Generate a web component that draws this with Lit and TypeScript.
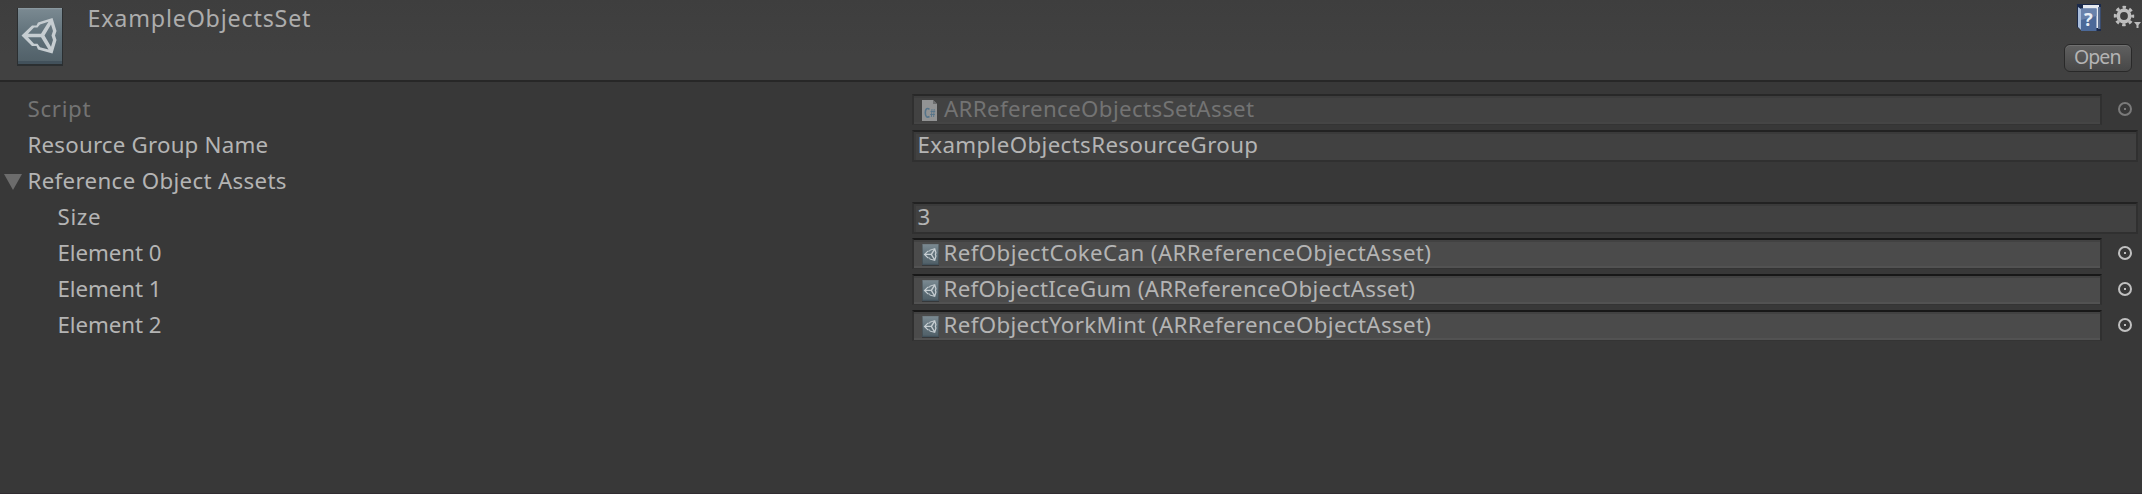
import { LitElement, html, css } from "lit";
import { customElement, property } from "lit/decorators.js";

/** A label whose tracking is derived from its nominal width. */
@customElement("fitted-label")
class FittedLabel extends LitElement {
  @property() text = "";
  @property({ type: Number }) span = 0;
  static styles = css`
    :host { display: block; white-space: pre; }
    .t { display: inline-block; }
  `;
  render() { return html`<span class="t">${this.text}</span>`; }
  updated() {
    const el = this.renderRoot.querySelector(".t") as HTMLElement;
    el.style.letterSpacing = "0px";
    const w = el.getBoundingClientRect().width;
    el.style.letterSpacing = ((this.span - w) / Math.max(1, this.text.length - 1)).toFixed(3) + "px";
  }
}

const label = (text: string, span: number) => html`<fitted-label .text=${text} .span=${span}></fitted-label>`;

const assetIcon = (w: number, h: number) => html`<svg class="asset" width=${w} height=${h} viewBox="0 0 46 60" preserveAspectRatio="none">
  <defs><linearGradient id="g" x1="0" y1="0" x2="0" y2="1"><stop offset="0" stop-color="#7b8a92"/><stop offset=".5" stop-color="#5f7079"/><stop offset="1" stop-color="#505f67"/></linearGradient></defs>
  <rect x="0" y="1" width="46" height="58" fill="#2b2f31"/>
  <rect x="1" y="1" width="44" height="56" fill="url(#g)"/>
  <rect x="1" y="1" width="44" height="1.2" fill="#8a989f"/><rect x="1" y="54" width="44" height="3" fill="#42515b"/>
  <path d="M4.500 28.500 15 18.500H19.500L21 15.500 35.500 11 39.500 24 38 28.500 39.500 33 35.500 46.500 21 42.500 19.500 39H15Z
    M11 26.700H24L31.500 14.800 23 17.500 20.500 20.500H17Z M11 30.300 17 36.800H20.500L23 40.200 31.500 42.500 24 30.300Z M27.500 28.500 34 39.800 36 33 34.500 28.500 36 24 34 17.500Z" fill="#c6cdd1" fill-rule="evenodd"/>
</svg>`;

const csIcon = html`<svg width="15" height="21" viewBox="0 0 15 21">
  <path d="M0 0H11L15 4V21H0Z" fill="#929394"/><path d="M11 0V4H15Z" fill="#6c6d6e"/>
  <path d="M7.500 9.300C5 7.500 3.300 9 3.300 12.800S5 18 7.500 16.500" fill="none" stroke="#55748a" stroke-width="1.600"/>
  <path d="M10 9 9.400 17M12.200 9 11.600 17M8.500 11.500H13.200M8.200 14.500H12.900" stroke="#55748a" stroke-width=".9"/>
</svg>`;

const picker = html`<svg class="picker" width="16" height="16" viewBox="0 0 16 16"><circle cx="8" cy="8" r="6" fill="none" stroke="currentColor" stroke-width="2"/><rect x="7" y="7" width="2" height="2" fill="currentColor"/></svg>`;

@customElement("app-root")
class AppRoot extends LitElement {
  static styles = css`
    :host { display: block; box-sizing: border-box; height: 494px; background: #383838; border-bottom: 1px solid #302c30; color: #b4b4b4; font: 22.300px/36px "Noto Sans", sans-serif; overflow: hidden; }
    * { box-sizing: border-box; }
    svg { display: block; flex: none; }
    .head { height: 82px; background: linear-gradient(#3e3e3e, #414141 70%); border-bottom: 2px solid #272727; display: flex; padding-left: 17px; }
    .head .asset { margin-top: 7px; }
    .title { flex: 1; margin: 0 0 0 24.500px; font-size: 23.300px; color: #adadad; }
    .tools { width: 78px; display: flex; flex-direction: column; padding-top: 3px; }
    .icons { display: flex; height: 41px; padding-left: 12px; gap: 8px; }
    .open { width: 68px; height: 28px; border: 1px solid #292929; border-radius: 6px; background: linear-gradient(#606060, #474747); box-shadow: inset 0 1px #707070; padding: 0 0 2px 9px; font: 19.500px/24px "Noto Sans", sans-serif; color: #b4b4b4; text-align: left; }
    .rows { padding-top: 9px; }
    .row { display: grid; grid-template-columns: 912px 1fr; height: 36px; align-items: start; }
    .name { display: flex; padding-left: 27.500px; }
    .deep .name { padding-left: 57.500px; }
    .fold .name { padding-left: 4px; gap: 5.500px; }
    .fold svg { margin-top: 11px; }
    .value { display: flex; padding-right: 4px; }
    .box { flex: 1; display: flex; height: 32px; margin-top: 3px; background: #414141; border: 2px solid #303030; border-top-color: #222; box-shadow: inset 0 2px #3a3a3a, inset 2px 0 #3b3b3b; padding-left: 3.500px; line-height: 26px; }
    .object .box { height: 31px; background: #4b4b4b; border-top-color: #181818; border-bottom: 1px solid #343434; margin-right: 16px; box-shadow: inset 0 2px #424242, inset 0 -2px #525252; padding-left: 8px; }
    .box svg { margin-top: 4px; }
    .box svg + fitted-label { margin-left: 4.500px; }
    .picker { margin: 10px 5px 0 -1px; color: #c0c0c0; }
    .off { color: #737373; }
    .object.off .box { background: #424242; border-top-color: #282828; box-shadow: inset 0 2px #3d3d3d, inset 0 -2px #454545; }
    .off .box svg + fitted-label { margin-left: 7px; }
    .off .picker { color: #7a7a7a; }
  `;

  object(name: string, w: number, value: string, vw: number, off = false) {
    return html`<div class="row object ${off ? "off" : "deep"}"><div class="name">${label(name, w)}</div>
      <div class="value"><div class="box">${off ? csIcon : assetIcon(17, 22)}${label(value, vw)}</div>${picker}</div></div>`;
  }
  field(name: string, w: number, value: string, vw: number, deep = false) {
    return html`<div class="row ${deep ? "deep" : ""}"><div class="name">${label(name, w)}</div>
      <div class="value"><div class="box">${label(value, vw)}</div></div></div>`;
  }
  render() {
    return html`
      <div class="head">${assetIcon(46, 60)}
        <div class="title">${label("ExampleObjectsSet", 223)}</div>
        <div class="tools"><div class="icons">
          <svg width="28" height="30" viewBox="0 0 28 30"><path d="M1 1H25V28H6L1 24Z" fill="#1b2a4a"/><path d="M7 2H23V25H7Z" fill="#e6eaf0"/><path d="M22 4H24.500V26H22Z" fill="#5b6f92"/><path d="M2 4 5 6V27L2 24Z" fill="#a9bddb"/><path d="M5 5.500H20.500V28H5Z" fill="#4c6998"/><path d="M5 5.500H20.500V13L5 17Z" fill="#6982ab"/><text x="8" y="22.500" font-size="18" font-weight="bold" fill="#e8eef6">?</text></svg>
          <svg width="30" height="30" viewBox="0 0 30 30"><g fill="none" stroke="#bdbdbd"><circle cx="12" cy="13" r="5.700" stroke-width="3.600"/><circle cx="12" cy="13" r="8.700" stroke-width="3" stroke-dasharray="3.416 3.416" stroke-dashoffset="1.708"/></g><path d="M22 19H29L26.500 22V25H24.500V22Z" fill="#bdbdbd"/></svg>
        </div><button class="open">${label("Open", 47.500)}</button></div>
      </div>
      <div class="rows">
        ${this.object("Script", 63, "ARReferenceObjectsSetAsset", 310, true)}
        ${this.field("Resource Group Name", 240.500, "ExampleObjectsResourceGroup", 340.500)}
        <div class="row fold"><div class="name"><svg width="18" height="16" viewBox="0 0 18 16"><path d="M0 0H18L9 16Z" fill="#6c6c6c"/></svg>${label("Reference Object Assets", 259)}</div></div>
        ${this.field("Size", 43, "3", 12, true)}
        ${this.object("Element 0", 104, "RefObjectCokeCan (ARReferenceObjectAsset)", 487.500)}
        ${this.object("Element 1", 104, "RefObjectIceGum (ARReferenceObjectAsset)", 471.500)}
        ${this.object("Element 2", 104, "RefObjectYorkMint (ARReferenceObjectAsset)", 487.500)}
      </div>`;
  }
}
